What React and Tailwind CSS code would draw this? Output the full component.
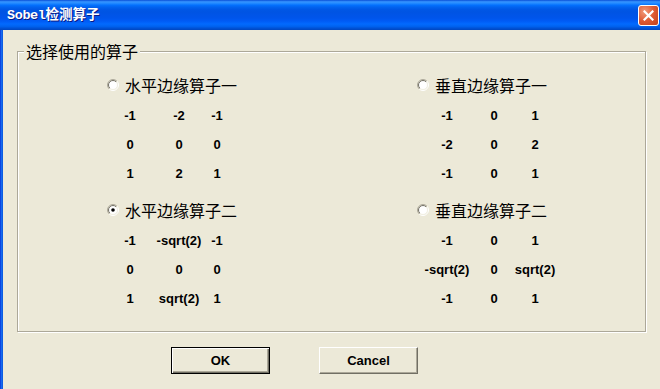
const SANS = "font-['Liberation_Sans',Arial,sans-serif]";
const CJK = "font-['Noto_Sans_CJK_SC','Noto_Sans',sans-serif]";

const LEFT_COLS = "grid-cols-[48px_50px_26px]";
const RIGHT_COLS = "grid-cols-[62px_32px_50px]";

const kernels = [
  {
    label: "水平边缘算子一",
    cols: LEFT_COLS,
    rows: [["-1", "-2", "-1"], ["0", "0", "0"], ["1", "2", "1"]],
  },
  {
    label: "垂直边缘算子一",
    cols: RIGHT_COLS,
    rows: [["-1", "0", "1"], ["-2", "0", "2"], ["-1", "0", "1"]],
  },
  {
    label: "水平边缘算子二",
    cols: LEFT_COLS,
    checked: true,
    rows: [["-1", "-sqrt(2)", "-1"], ["0", "0", "0"], ["1", "sqrt(2)", "1"]],
  },
  {
    label: "垂直边缘算子二",
    cols: RIGHT_COLS,
    rows: [["-1", "0", "1"], ["-sqrt(2)", "0", "sqrt(2)"], ["-1", "0", "1"]],
  },
];

function Radio({ checked }) {
  return (
    <svg width="12" height="12" viewBox="0 0 12 12" className="ml-[1px] shrink-0">
      <defs>
        <linearGradient id="rOuter" x1="0" y1="0" x2="1" y2="1">
          <stop offset="0.5" stopColor="#ACA899" />
          <stop offset="0.5" stopColor="#FFFFFF" />
        </linearGradient>
        <linearGradient id="rInner" x1="0" y1="0" x2="1" y2="1">
          <stop offset="0.5" stopColor="#716F64" />
          <stop offset="0.5" stopColor="#F1EFE2" />
        </linearGradient>
      </defs>
      <circle cx="6" cy="6" r="5.5" fill="none" stroke="url(#rOuter)" strokeWidth="1" />
      <circle cx="6" cy="6" r="4.5" fill="#FFFFFF" stroke="url(#rInner)" strokeWidth="1" />
      {checked && <circle cx="6" cy="6" r="1.8" fill="#000000" />}
    </svg>
  );
}

function Kernel({ label, cols, rows, checked }) {
  return (
    <div className="flex flex-col">
      <div className="h-[20px] flex items-center gap-[6px]">
        <Radio checked={checked} />
        <span className={`${CJK} text-[16px] leading-[20px] text-black`}>{label}</span>
      </div>
      <div className={`grid ${cols} mt-[6px]`}>
        {rows.flat().map((v, i) => (
          <div key={i} className="h-[29px] leading-[29px] text-center whitespace-nowrap text-[13px] font-bold text-black">
            {v}
          </div>
        ))}
      </div>
    </div>
  );
}

function Button({ children, isDefault }) {
  return (
    <button
      className={`w-[99px] h-[27px] bg-[#ECE9D8] text-[13px] font-bold text-black ${
        isDefault
          ? "border border-black shadow-[inset_1px_1px_0_#fff,inset_-1px_-1px_0_#716F64,inset_-2px_-2px_0_#ACA899]"
          : "border border-t-white border-l-white border-b-[#716F64] border-r-[#716F64] shadow-[inset_-1px_-1px_0_#ACA899]"
      }`}
    >
      {children}
    </button>
  );
}

export default function App() {
  return (
    <div className={`w-[660px] h-[389px] overflow-hidden flex flex-col bg-[#ECE9D8] ${SANS}`}>
      {/* title bar */}
      <div className="h-[30px] shrink-0 flex items-center pl-[7px] pr-[1px] bg-[linear-gradient(to_bottom,#0A4FD6_0%,#3593FF_6%,#288EFF_10%,#127DFF_14%,#036FFC_18%,#0262EE_24%,#0057E5_32%,#0054E3_40%,#0055EB_60%,#005BF5_70%,#026AFE_80%,#0062EF_88%,#0052D6_94%,#0046C0_100%)]">
        <span className="text-white font-bold [text-shadow:1px_1px_0_#0A1883] flex items-baseline">
          <span className="font-['Liberation_Mono',monospace] text-[13.5px] tracking-[-0.4px]">Sobel</span>
          <span className={`${CJK} text-[13.5px]`}>检测算子</span>
        </span>
        <div className="ml-auto w-[21px] h-[21px] rounded-[3px] border border-white flex items-center justify-center bg-[radial-gradient(circle_at_30%_30%,#F29A7A_0%,#DE5A33_50%,#C2401B_100%)]">
          <svg width="11" height="11" viewBox="0 0 11 11">
            <path d="M1.5 1.5 L9.5 9.5 M9.5 1.5 L1.5 9.5" stroke="#FFFFFF" strokeWidth="2.2" strokeLinecap="square" />
          </svg>
        </div>
      </div>

      <div className="flex-1 flex">
        {/* left window frame */}
        <div className="w-[3px] bg-[linear-gradient(to_right,#0831D9,#166AEE,#0855DD)]" />

        <div className="flex-1 pl-[14px] pt-[21px]">
          {/* group box */}
          <div className="relative w-[629px] h-[281px] border border-[#ACA899] shadow-[inset_1px_1px_0_#fff,1px_1px_0_#fff]">
            <span className={`absolute left-[6px] top-[-11px] px-[2px] bg-[#ECE9D8] ${CJK} text-[16px] leading-[20px] text-black`}>
              选择使用的算子
            </span>
            <div className="grid grid-cols-[310px_auto] gap-y-[12px] pl-[88px] pt-[23px]">
              {kernels.map((k, i) => (
                <Kernel key={i} {...k} />
              ))}
            </div>
          </div>

          <div className="flex gap-[49px] pl-[154px] mt-[15px]">
            <Button isDefault>OK</Button>
            <Button>Cancel</Button>
          </div>
        </div>
      </div>
    </div>
  );
}
